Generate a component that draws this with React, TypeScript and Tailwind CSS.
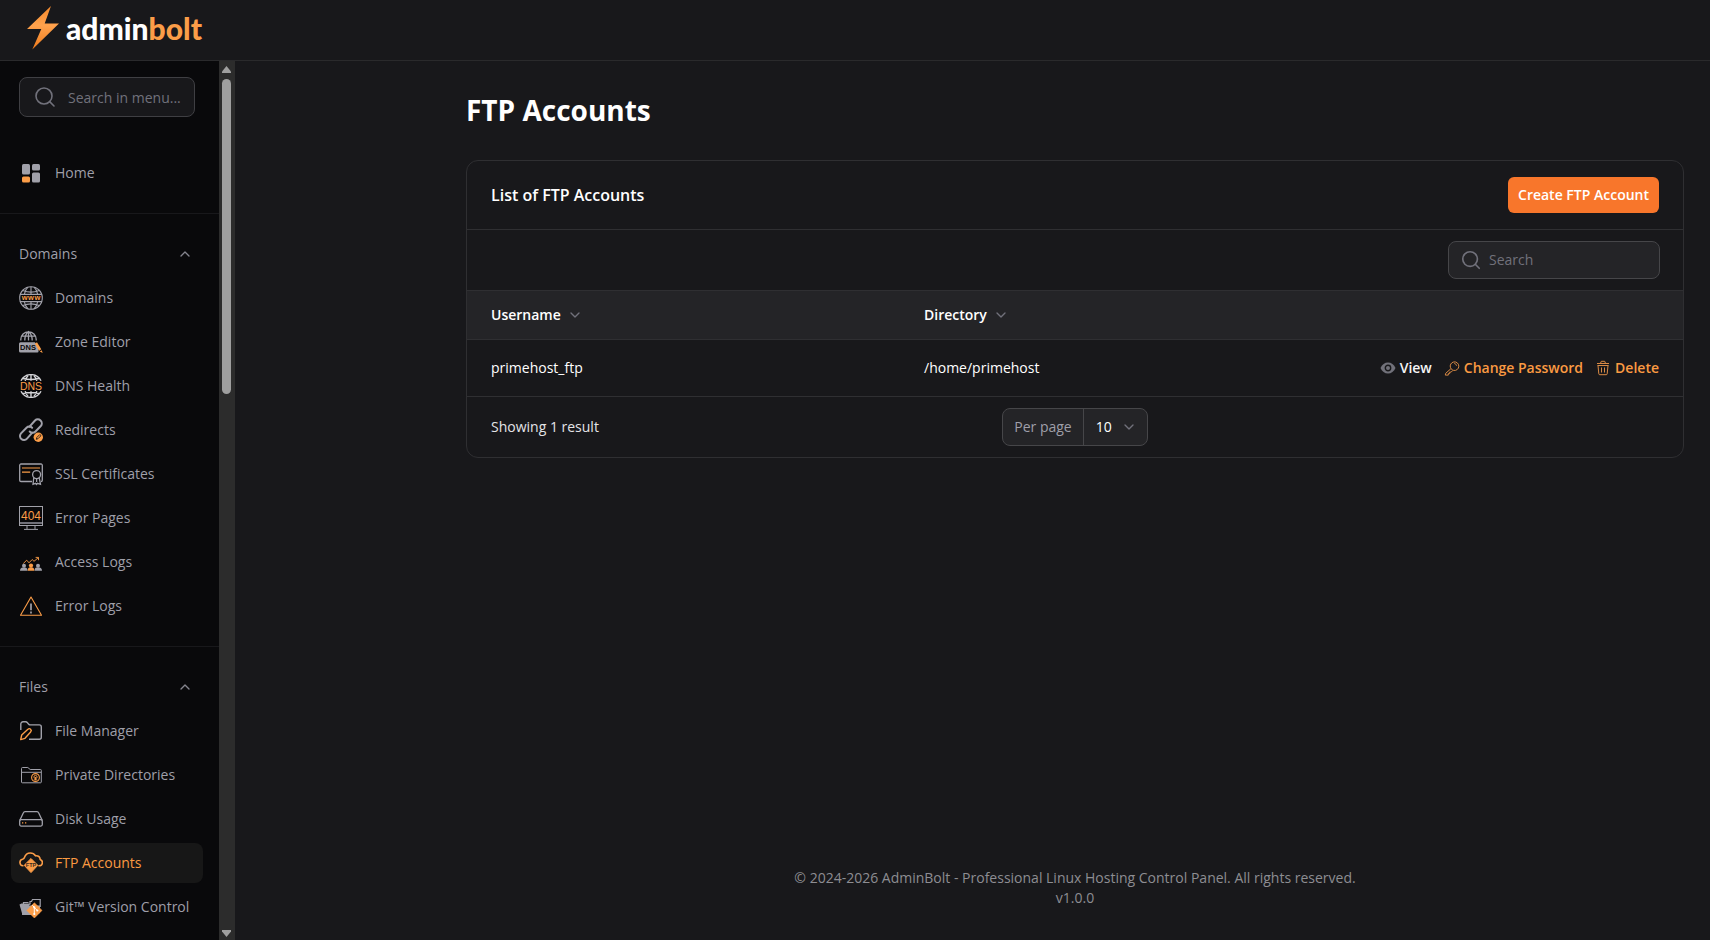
import type { ReactNode } from 'react';
import clsx from 'clsx';
import { ChevronDown, ChevronUp, Search } from 'lucide-react';

const GRAY = '#a1a1aa';
const ORANGE = '#fb9d48';

interface NavItem {
  label: string;
  icon: string;
  active?: boolean;
}

interface NavGroup {
  label: string;
  items: NavItem[];
}

const groups: NavGroup[] = [
  {
    label: 'Domains',
    items: [
      { label: 'Domains', icon: 'Globe' },
      { label: 'Zone Editor', icon: 'Zone' },
      { label: 'DNS Health', icon: 'Dns' },
      { label: 'Redirects', icon: 'Redirects' },
      { label: 'SSL Certificates', icon: 'Ssl' },
      { label: 'Error Pages', icon: 'ErrorPages' },
      { label: 'Access Logs', icon: 'AccessLogs' },
      { label: 'Error Logs', icon: 'ErrorLogs' },
    ],
  },
  {
    label: 'Files',
    items: [
      { label: 'File Manager', icon: 'FileManager' },
      { label: 'Private Directories', icon: 'PrivateDirs' },
      { label: 'Disk Usage', icon: 'Disk' },
      { label: 'FTP Accounts', icon: 'Ftp', active: true },
      { label: 'Git™ Version Control', icon: 'Git' },
    ],
  },
];

const accounts = [{ username: 'primehost_ftp', directory: '/home/primehost' }];

const getIcon = (name: string): ReactNode => {
  switch (name) {
    case 'Home':
      return (
        <>
          <rect x="3" y="3" width="8" height="10.5" rx="1.5" fill={GRAY} />
          <rect x="13" y="3" width="8" height="6.5" rx="1.5" fill={GRAY} />
          <rect x="3" y="15.5" width="8" height="6" rx="1.5" fill={ORANGE} />
          <rect x="13" y="11.5" width="8" height="10" rx="1.5" fill={GRAY} />
        </>
      );
    case 'Globe':
      return (
        <>
          <g fill="none" stroke={GRAY} strokeWidth="1.1">
            <circle cx="12" cy="12" r="11.3" />
            <path d="M12 .8v7.4M12 15.8v7.4M9 1.2C7 3 5.8 5.4 5.4 8.2M15 1.2c2 1.8 3.2 4.2 3.6 7M5.4 15.8c.4 2.8 1.6 5.2 3.6 7M18.6 15.8c-.4 2.8-1.6 5.2-3.6 7" />
            <path d="M3.8 4.5c5 2 11.4 2 16.4 0M3.8 19.5c5-2 11.4-2 16.4 0M.8 8.4h22.4M.8 15.6h22.4" />
          </g>
          <text
            x="5.7 12 18.300"
            y="14.2"
            fontSize="7.5"
            fontWeight="bold"
            fontFamily="Liberation Sans, sans-serif"
            textAnchor="middle"
            fill={ORANGE}
          >
            www
          </text>
        </>
      );
    case 'Zone':
      return (
        <>
          <g fill="none" stroke={GRAY} strokeWidth="1.3">
            <path d="M1.8 10.500V9.500a7.700 7.700 0 0 1 15.400 0v1M9.500 1.500v9M5.800 10.500c0-4 1.300-7 3.700-9 2.400 2 3.700 5 3.700 9M2.800 6.200h13.400" />
          </g>
          <path d="M1.500 12.200h14.500l3.500 6v3.200a1 1 0 0 1-1 1h-17A1.500 1.500 0 0 1 0 20.900v-7.200a1.500 1.500 0 0 1 1.500-1.500z" fill={GRAY} />
          <text
            x="9"
            y="20"
            fontSize="7.5"
            fontWeight="bold"
            fontFamily="Liberation Sans, sans-serif"
            textAnchor="middle"
            fill="#09090b"
          >
            DNS
          </text>
          <path d="M15.800 13.800 18 12.300l4.300 7-2.200 1.500z" fill={ORANGE} />
          <path d="m20.800 21.500 1.900-1.300 1 2.900z" fill={ORANGE} />
        </>
      );
    case 'Dns':
      return (
        <>
          <g fill="none" stroke="#d4d4d8" strokeWidth="1.4">
            <path d="M2 6.8a11.2 11.2 0 0 1 20 0M2 17.2a11.2 11.2 0 0 0 20 0" />
            <path d="M12 1v5.8M12 17.2V23M9.2 1.4C7.7 2.8 6.7 4.6 6.2 6.8M14.8 1.4c1.5 1.4 2.5 3.2 3 5.4M6.2 17.2c.5 2.2 1.5 4 3 5.4M17.8 17.2c-.5 2.2-1.5 4-3 5.4M4 4.5c5 1.3 11 1.3 16 0M4 19.5c5-1.3 11-1.3 16 0" />
          </g>
          <text
            x="12"
            y="15.6"
            fontSize="10.5"
            fontFamily="Liberation Sans, sans-serif"
            textAnchor="middle"
            fill={ORANGE}
          >
            DNS
          </text>
        </>
      );
    case 'Redirects':
      return (
        <>
          <g fill="none" stroke={GRAY} strokeWidth="2" strokeLinecap="round">
            <path d="M10.3 8.8 16 2.5a4 4 0 0 1 5.8 5.5l-5.3 5.5a4 4 0 0 1-5.8 0" />
            <path d="M13.3 14.7 8 20.7a4 4 0 0 1-6-5.300l5.500-5.700a4 4 0 0 1 5.600 0" />
          </g>
          <circle cx="19.3" cy="19.3" r="4.7" fill={ORANGE} />
          <path d="m17.3 21.3.5-1.8 3-3 1.2 1.2-3 3z" fill="none" stroke="#09090b" strokeWidth=".8" />
        </>
      );
    case 'Ssl':
      return (
        <>
          <g fill="none" stroke={GRAY} strokeWidth="1.3">
            <path d="M13 19.5H2a1.3 1.3 0 0 1-1.3-1.3V3.3A1.3 1.3 0 0 1 2 2h20a1.3 1.3 0 0 1 1.3 1.3v14.9a1.3 1.3 0 0 1-1.3 1.3" />
            <circle cx="17.6" cy="12.6" r="4" />
            <path d="M14.8 15.5 14 22.3l2.5-1 1 1.2 1-1.2 3 1-1.3-6.8M17.6 17v3" />
          </g>
          <path d="M3 6h18M3 10.2h8.2" stroke={ORANGE} strokeWidth="1.2" />
        </>
      );
    case 'ErrorPages':
      return (
        <>
          <g fill="none" stroke={GRAY} strokeWidth="1">
            <rect x=".5" y=".5" width="23" height="19" />
            <path d="M8 19.5V23M16 19.5V23M5 23.4h14" />
          </g>
          <path d="M1 17h22" stroke="#71717a" strokeWidth="2" />
          <text
            x="12"
            y="14"
            fontSize="12"
            fontFamily="Liberation Sans, sans-serif"
            textAnchor="middle"
            fill={ORANGE}
          >
            404
          </text>
        </>
      );
    case 'AccessLogs':
      return (
        <>
          <g fill={GRAY}>
            <circle cx="5" cy="15.8" r="2" />
            <path d="M1 20.8c0-2 1-3 2.8-3.300h2.400C8 17.800 8.500 19 8.500 20.800z" />
            <circle cx="19" cy="15.8" r="2" />
            <path d="M15.5 20.8c0-2 .5-3 2.300-3.300h2.400c1.800.3 2.800 1.300 2.800 3.300z" />
          </g>
          <circle cx="12" cy="15.5" r="2.1" fill={ORANGE} />
          <path d="M8.7 20.8c0-2 .7-3.200 2.300-3.500h2c1.600.3 2.300 1.500 2.300 3.500z" fill={ORANGE} />
          <path d="m4.300 13.500 3.400-3.300 2.300 2.600 3.200-3.300 1.800 1.800 4.300-3.600M16.600 7.400h2.900v2.800" fill="none" stroke={ORANGE} strokeWidth=".9" />
        </>
      );
    case 'ErrorLogs':
      return (
        <>
          <path d="M12 3 22.5 21.3h-21z" fill="none" stroke={ORANGE} strokeWidth="1.1" strokeLinejoin="round" />
          <path d="M12 9.5v6.7M12 17.5v2" stroke={GRAY} strokeWidth="1.7" />
        </>
      );
    case 'FileManager':
      return (
        <>
          <path
            d="M1.8 11V5A2.200 2.200 0 0 1 4 2.800h2.700a2 2 0 0 1 1.500.7l1.500 1.700a2 2 0 0 0 1.500.7h9.100a2 2 0 0 1 2 2v10.300a2 2 0 0 1-2 2H10"
            fill="none"
            stroke={GRAY}
            strokeWidth="1.4"
          />
          <path
            d="M1.7 20.6 2.7 16l6.200-5.700a1.900 1.900 0 0 1 2.700 2.700L6 19.300z"
            fill="none"
            stroke={ORANGE}
            strokeWidth="1.4"
            strokeLinejoin="round"
          />
        </>
      );
    case 'PrivateDirs':
      return (
        <>
          <g fill="none" stroke={GRAY} strokeWidth="1">
            <path d="M2.5 19V5.5a1 1 0 0 1 1-1h5.300l2.400 2h10.300a.8.8 0 0 1 .8.8V19a.8.8 0 0 1-.8.8h-18.200a.8.8 0 0 1-.8-.8z" />
            <path d="M2.5 9.3h19.800" />
          </g>
          <circle cx="16.5" cy="14.500" r="3.900" fill="#09090b" stroke={ORANGE} strokeWidth="1.1" />
          <circle cx="16.5" cy="14" r="1.6" fill="none" stroke={ORANGE} strokeWidth=".9" />
          <path d="M16.5 14v3M14.8 16.8h3.4" stroke={ORANGE} strokeWidth=".9" />
        </>
      );
    case 'Disk':
      return (
        <>
          <g fill="none" stroke={GRAY} strokeWidth="1.3" strokeLinejoin="round">
            <path d="M.7 13.500 4.400 5.700A1.800 1.800 0 0 1 6 4.600h12a1.800 1.800 0 0 1 1.600 1.100l3.700 7.800" />
            <rect x=".7" y="12.6" width="22.6" height="6.5" rx="1.5" />
          </g>
          <path d="M3 15.8h1.300M6 15.8h1.300" stroke={ORANGE} strokeWidth="1.2" />
        </>
      );
    case 'Ftp':
      return (
        <>
          <path
            d="M4.500 14.800H4a3.300 3.300 0 0 1-.5-6.500C4.500 8 5 7.800 5.300 6.800 6.300 3.800 8.700 2 11.300 2c2 0 4 1 5.200 2.800 3-.2 4.500 1.500 4.700 3.600 1.500.6 2.200 1.700 2.200 3.100 0 1.900-1.500 3.300-3.600 3.300h-.4"
            fill="none"
            stroke={ORANGE}
            strokeWidth="1.6"
          />
          <path d="m12 7.5 6.8 6.800-6.800 7.300-6.800-7.300z" fill={ORANGE} stroke={ORANGE} strokeLinejoin="round" />
          <text
            x="12"
            y="15.7"
            fontSize="5.5"
            fontWeight="bold"
            fontFamily="Liberation Sans, sans-serif"
            textAnchor="middle"
            fill="#3b2a1b"
          >
            FTP
          </text>
        </>
      );
    case 'Git':
      return (
        <>
          <path d="M.5 9.500 2.500 8.500h9L3.500 20z" fill={GRAY} />
          <path d="M3.500 10.500h17.500V18l-6 2H3z" fill={GRAY} />
          <path d="M11 9.500V6.500h1.500l1-2h7.700V12M4.500 9V7.500h5" fill="none" stroke={GRAY} strokeWidth="1.2" />
          <path d="M15.4 7.8 23 15.400 15.400 23l-7.600-7.600z" fill={ORANGE} stroke={ORANGE} strokeWidth=".6" strokeLinejoin="round" />
          <path d="M13.3 10.300 15.300 12.300v7M15.300 12.500l3 3" fill="none" stroke="#fff" strokeWidth="1" />
          <circle cx="15.3" cy="12.3" r="1.1" fill="#fff" />
          <circle cx="15.3" cy="19" r="1.1" fill="#fff" />
          <circle cx="18.3" cy="15.5" r="1.1" fill="#fff" />
        </>
      );
    default:
      return null;
  }
};

function NavLink({ label, icon, active }: NavItem) {
  return (
    <a
      href="#"
      aria-current={active ? 'page' : undefined}
      className={clsx(
        'flex h-10 items-center gap-3 rounded-lg px-2 text-sm whitespace-nowrap',
        active ? 'bg-[#171717] font-medium text-[#fb9a42]' : 'text-zinc-400 hover:bg-white/5'
      )}
    >
      <svg className="size-6 shrink-0" viewBox="0 0 24 24" aria-hidden="true">
        {getIcon(icon)}
      </svg>
      {label}
    </a>
  );
}

function Logo() {
  return (
    <a href="#" className="flex items-center gap-[7px]">
      <svg className="h-11 w-8" viewBox="0 0 32 44" aria-hidden="true">
        <defs>
          <linearGradient id="bolt" x1="0" y1="0" x2="0" y2="1">
            <stop offset="0" stopColor="#f58a2c" />
            <stop offset=".45" stopColor="#ffa24d" />
            <stop offset="1" stopColor="#ee7a1c" />
          </linearGradient>
        </defs>
        <path d="M24 0 0 23h14.300L5.300 43.500 32 17.600H17.700z" fill="url(#bolt)" />
      </svg>
      <span className="pb-px font-[Lato,sans-serif] text-[30px] leading-9 font-black text-white">
        admin<span className="text-[#fb9d48]">bolt</span>
      </span>
    </a>
  );
}

function Sidebar() {
  return (
    <aside className="flex shrink-0 bg-[#09090b]">
      <div className="w-[219px] overflow-hidden pt-4">
        <div className="relative mr-6 ml-[19px]">
          <Search className="absolute top-2 left-3.5 size-6 text-zinc-500" strokeWidth={1.6} aria-hidden="true" />
          <input
            type="text"
            aria-label="Search in menu"
            placeholder="Search in menu..."
            className="h-10 w-full rounded-lg border border-[#3f3f43] bg-[#18181b] pr-2 pl-12 text-sm text-white placeholder:text-zinc-500"
          />
        </div>
        <nav className="mt-9">
          <div className="border-b border-[#18181b] pr-4 pb-5 pl-[11px]">
            <NavLink label="Home" icon="Home" />
          </div>
          {groups.map((group) => (
            <section key={group.label} className="border-b border-[#18181b] py-5 pr-4 pl-[11px]">
              <button
                type="button"
                aria-expanded="true"
                className="flex h-10 w-full items-center justify-between pr-2.5 pl-2 text-sm text-zinc-400"
              >
                {group.label}
                <ChevronUp className="size-4 text-[#85858e]" strokeWidth={2} aria-hidden="true" />
              </button>
              <ul className="mt-1 flex flex-col gap-1">
                {group.items.map((item) => (
                  <li key={item.label}>
                    <NavLink {...item} />
                  </li>
                ))}
              </ul>
            </section>
          ))}
        </nav>
      </div>
      <div className="flex w-4 flex-col bg-[#2c2c2c] pt-[5px] pb-[3px] pl-[3px]" aria-hidden="true">
        <svg className="h-[7px] w-[9px]" viewBox="0 0 9 7">
          <path d="M4.500 0 9 5.500V7H0V5.500z" fill="#9f9f9f" />
        </svg>
        <div className="mt-1.5 w-[9px] grow">
          <div className="h-[37%] rounded-full bg-[#9f9f9f]" />
        </div>
        <svg className="h-[7px] w-[9px]" viewBox="0 0 9 7">
          <path d="M4.500 7 9 1.500V0H0v1.500z" fill="#9f9f9f" />
        </svg>
      </div>
    </aside>
  );
}

function SortHeader({ label }: { label: string }) {
  return (
    <button type="button" className="flex items-center gap-1.5 font-semibold">
      {label}
      <ChevronDown className="size-4 text-zinc-500" strokeWidth={2} aria-hidden="true" />
    </button>
  );
}

function RowActions() {
  return (
    <div className="flex items-center justify-end gap-3 font-semibold text-[#fb9a42]">
      <button type="button" className="flex items-center gap-1 text-zinc-100">
        <svg className="size-4" viewBox="0 0 16 16" fill="none" aria-hidden="true">
          <path d="M.5 8C1.800 4.500 4.800 2.500 8 2.500s6.200 2 7.500 5.500c-1.300 3.500-4.300 5.500-7.500 5.500S1.800 11.500.5 8z" fill="#71717a" />
          <circle cx="8" cy="8" r="2.700" fill="#71717a" stroke="#18181b" strokeWidth="1.400" />
        </svg>
        View
      </button>
      <button type="button" className="flex items-center gap-1">
        <svg className="size-4" viewBox="0 0 16 16" fill="none" stroke="#d98a45" strokeLinejoin="round" aria-hidden="true">
          <path d="M6.800 8.800 1.700 13.300l-.4 1.800h3v-1.500h1.400v-1.500h1.500l1.400-1.500M6.500 7.700a4.300 4.300 0 1 1 3.200 2.700c-1-.1-2.500-1-3.200-2.700z" />
          <path d="M10.300 3.500c1.300.2 2 1 2.200 2.200" />
        </svg>
        Change Password
      </button>
      <button type="button" className="flex items-center gap-1">
        <svg className="size-4" viewBox="0 0 16 16" fill="none" stroke="#d98a45" strokeLinejoin="round" aria-hidden="true">
          <path d="M2 3.500h12M5.500 3.300 6.300 1.300h3.400l.8 2M3 5.500l.8 8.300a1 1 0 0 0 1 .9h6.400a1 1 0 0 0 1-.9l.8-8.300M2.500 5.500h11M6.500 7.500v5M9.500 7.500v5" />
        </svg>
        Delete
      </button>
    </div>
  );
}

function AccountsCard() {
  return (
    <section className="overflow-hidden rounded-xl border border-[#2f2f32] bg-[#18181b] text-sm">
      <div className="flex items-center justify-between border-b border-[#2f2f32] px-6 py-4">
        <h2 className="text-base font-semibold text-white">List of FTP Accounts</h2>
        <button type="button" className="h-9 rounded-md bg-[#f8762b] px-2.5 font-semibold text-white">
          Create FTP Account
        </button>
      </div>
      <div className="flex justify-end border-b border-[#2f2f32] px-[23px] py-[11px]">
        <div className="relative w-[212px]">
          <Search className="absolute top-2 left-3 size-[22px] text-zinc-500" strokeWidth={1.8} aria-hidden="true" />
          <input
            type="search"
            aria-label="Search"
            placeholder="Search"
            className="h-[38px] w-full rounded-lg border border-[#464649] bg-[#242427] pr-3 pb-0.5 pl-10 text-white placeholder:text-zinc-500"
          />
        </div>
      </div>
      <table className="w-full text-left text-white">
        <thead className="bg-[#242427]">
          <tr className="h-12 border-b border-[#2f2f32]">
            <th className="w-[433px] px-6">
              <SortHeader label="Username" />
            </th>
            <th className="px-6">
              <SortHeader label="Directory" />
            </th>
            <th aria-label="Actions" />
          </tr>
        </thead>
        <tbody>
          {accounts.map((account) => (
            <tr key={account.username} className="h-[57px] border-b border-[#2f2f32]">
              <td className="px-6">{account.username}</td>
              <td className="px-6">{account.directory}</td>
              <td className="px-6">
                <RowActions />
              </td>
            </tr>
          ))}
        </tbody>
      </table>
      <div className="grid grid-cols-3 items-center px-6 py-[11px]">
        <span className="text-zinc-200">Showing 1 result</span>
        <div className="flex h-[38px] items-center justify-self-center rounded-lg border border-[#464649] bg-[#242427]">
          <label htmlFor="per-page" className="px-[11px] text-zinc-400">
            Per page
          </label>
          <div className="relative h-full border-l border-[#464649]">
            <select id="per-page" className="h-full w-[63px] appearance-none pl-3 text-white">
              <option>10</option>
              <option>25</option>
              <option>50</option>
            </select>
            <ChevronDown
              className="pointer-events-none absolute top-2.5 right-2.5 size-4 text-zinc-500"
              strokeWidth={2}
              aria-hidden="true"
            />
          </div>
        </div>
      </div>
    </section>
  );
}

export default function App() {
  return (
    <div className="flex h-screen flex-col bg-[#18181b] font-['Open_Sans',sans-serif]">
      <header className="flex h-[61px] shrink-0 items-center border-b border-[#2a2a2c] pb-1 pl-[27px]">
        <Logo />
      </header>
      <div className="flex min-h-0 flex-1">
        <Sidebar />
        <main className="flex grow flex-col">
          <div className="ml-auto flex w-full max-w-[1270px] grow flex-col px-[26px] pt-[31px] pb-8">
            <h1 className="text-[28px] leading-9 font-bold text-white">FTP Accounts</h1>
            <div className="mt-8">
              <AccountsCard />
            </div>
            <footer className="mt-auto text-center text-sm text-[#8d8d92]">
              <p>© 2024-2026 AdminBolt - Professional Linux Hosting Control Panel. All rights reserved.</p>
              <p>v1.0.0</p>
            </footer>
          </div>
        </main>
      </div>
    </div>
  );
}
